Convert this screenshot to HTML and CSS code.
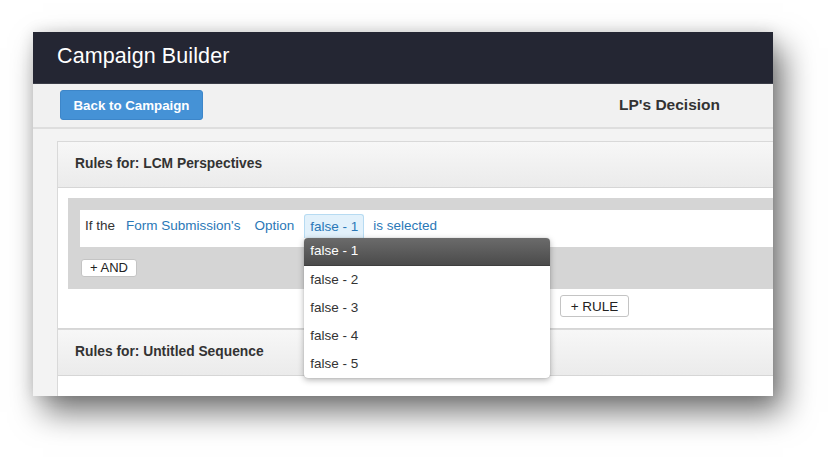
FILE: index.html
```html
<!DOCTYPE html>
<html>
<head>
<meta charset="utf-8">
<link rel="stylesheet" href="styles.css">
</head>
<body>
<div class="window">
  <header class="topbar"><h1 class="title">Campaign Builder</h1></header>
  <div class="toolbar">
    <button class="btn-primary">Back to Campaign</button>
    <div class="decision">LP's Decision</div>
  </div>
  <div class="content">
    <section class="panel">
      <div class="panel-head">Rules for: LCM Perspectives</div>
      <div class="panel-body">
        <div class="rule-group">
          <div class="rule-row">
            <span class="tok tok-text">If the</span>
            <a class="tok tok-link t-form">Form Submission's</a>
            <a class="tok tok-link t-opt">Option</a>
            <span class="chip-wrap">
              <span class="chip">false - 1</span>
              <ul class="dropdown">
                <li class="dd-item active">false - 1</li>
                <li class="dd-item">false - 2</li>
                <li class="dd-item">false - 3</li>
                <li class="dd-item">false - 4</li>
                <li class="dd-item">false - 5</li>
              </ul>
            </span>
            <a class="tok tok-link t-sel">is selected</a>
          </div>
          <div class="and-row"><button class="btn-small">+ AND</button></div>
        </div>
        <div class="rule-actions"><button class="btn-rule">+ RULE</button></div>
      </div>
    </section>
    <section class="panel panel2">
      <div class="panel-head">Rules for: Untitled Sequence</div>
      <div class="panel-body short"></div>
    </section>
  </div>
</div>
</body>
</html>
```

FILE: styles.css
```css
* { box-sizing: border-box; }
html, body { margin: 0; padding: 0; background: #ffffff; }
body {
  font-family: "Liberation Sans", Arial, sans-serif;
  color: #333;
  width: 838px;
  height: 461px;
  overflow: hidden;
  padding: 32px 0 0 33px;
}
.window {
  width: 740px;
  height: 364px;
  background: #f2f2f2;
  overflow: hidden;
  position: relative;
  box-shadow: 10px 16px 30px rgba(0,0,0,0.55), 0 0 14px rgba(0,0,0,0.12);
}
.topbar {
  height: 52px;
  background: #242633;
  border-bottom: 1px solid #3a3d48;
  display: flex;
  align-items: center;
  padding-left: 24px;
}
.title {
  margin: 0 0 2px 0;
  color: #fff;
  font-weight: normal;
  font-size: 21.5px;
  letter-spacing: 0.1px;
}
.toolbar {
  height: 45px;
  background: #f1f1f1;
  border-bottom: 2px solid #dedede;
  display: flex;
  align-items: center;
  justify-content: space-between;
  padding: 0 53px 0 27px;
}
.btn-primary {
  height: 30px;
  width: 143px;
  border: 1px solid #3d86c9;
  border-radius: 3px;
  background: #4592d6;
  color: #fff;
  font-family: inherit;
  font-weight: bold;
  font-size: 13.3px;
  padding: 0;
  margin-top: -1px;
}
.decision {
  font-weight: bold;
  font-size: 15.5px;
  color: #333;
  margin-top: -2px;
}
.content {
  padding: 12px 0 0 24px;
  background: #f3f3f3;
}
.panel {
  width: 1075px;
  border: 1px solid #d9d9d9;
  background: #fff;
}
.panel2 { border-top: none; }
.panel-head {
  height: 46px;
  background: linear-gradient(#f7f7f7, #ebebeb);
  border-bottom: 1px solid #d6d6d6;
  display: flex;
  align-items: center;
  padding: 0 0 2px 17px;
  font-weight: bold;
  font-size: 13.8px;
  color: #333;
}
.panel2 .panel-head { height: 46px; }
.panel-body {
  padding: 10px 10px 11px 10px;
  border-bottom: 1px solid #d6d6d6;
}
.panel-body.short { height: 40px; border-bottom: none; }
.rule-group {
  background: #d5d5d5;
  padding: 12px 0 12px 12px;
}
.rule-row {
  height: 37px;
  background: #fff;
  display: flex;
  align-items: flex-start;
  padding: 4px 0 0 5px;
  font-size: 13.5px;
  line-height: 24px;
}
.tok { white-space: nowrap; }
.tok-text { color: #333; }
.tok-link { color: #2a78b7; cursor: pointer; }
.t-form { margin-left: 11px; }
.t-opt { margin-left: 14px; }
.chip-wrap { position: relative; margin-left: 10px; }
.chip {
  display: block;
  height: 24px;
  line-height: 23px;
  padding: 0 5px;
  white-space: nowrap;
  background: #e2f1fb;
  border: 1px solid #b7dbf2;
  border-bottom: none;
  border-radius: 3px 3px 0 0;
  color: #2a78b7;
}
.t-sel { margin-left: 9px; }
.dropdown {
  position: absolute;
  top: 24px;
  left: 0;
  width: 246px;
  margin: 0;
  padding: 0;
  list-style: none;
  background: #fff;
  border-radius: 4px;
  box-shadow: 0 2px 6px rgba(0,0,0,0.3), 0 0 1px rgba(0,0,0,0.3);
  z-index: 5;
}
.dd-item {
  height: 28px;
  line-height: 27px;
  padding-left: 6px;
  color: #333;
  font-size: 13.5px;
  white-space: nowrap;
}
.dd-item.active {
  height: 28px;
  line-height: 26px;
  background: linear-gradient(#6b6b6b, #4b4b4b);
  color: #fff;
  border-radius: 4px 4px 0 0;
  border-bottom: 1px solid #3e3e3e;
}
.and-row {
  padding-top: 12px;
}
.btn-small {
  height: 18px;
  width: 56px;
  padding: 0;
  background: #fff;
  border: 1px solid #c4c4c4;
  border-radius: 3px;
  font-family: inherit;
  font-size: 13px;
  line-height: 16px;
  color: #222;
  margin-left: 1px;
  display: block;
}
.rule-actions {
  display: flex;
  padding: 6px 0 0 492px;
}
.btn-rule {
  height: 22px;
  width: 69px;
  padding: 0;
  background: #fff;
  border: 1px solid #c4c4c4;
  border-radius: 3px;
  font-family: inherit;
  font-size: 13.5px;
  color: #222;
}
```
